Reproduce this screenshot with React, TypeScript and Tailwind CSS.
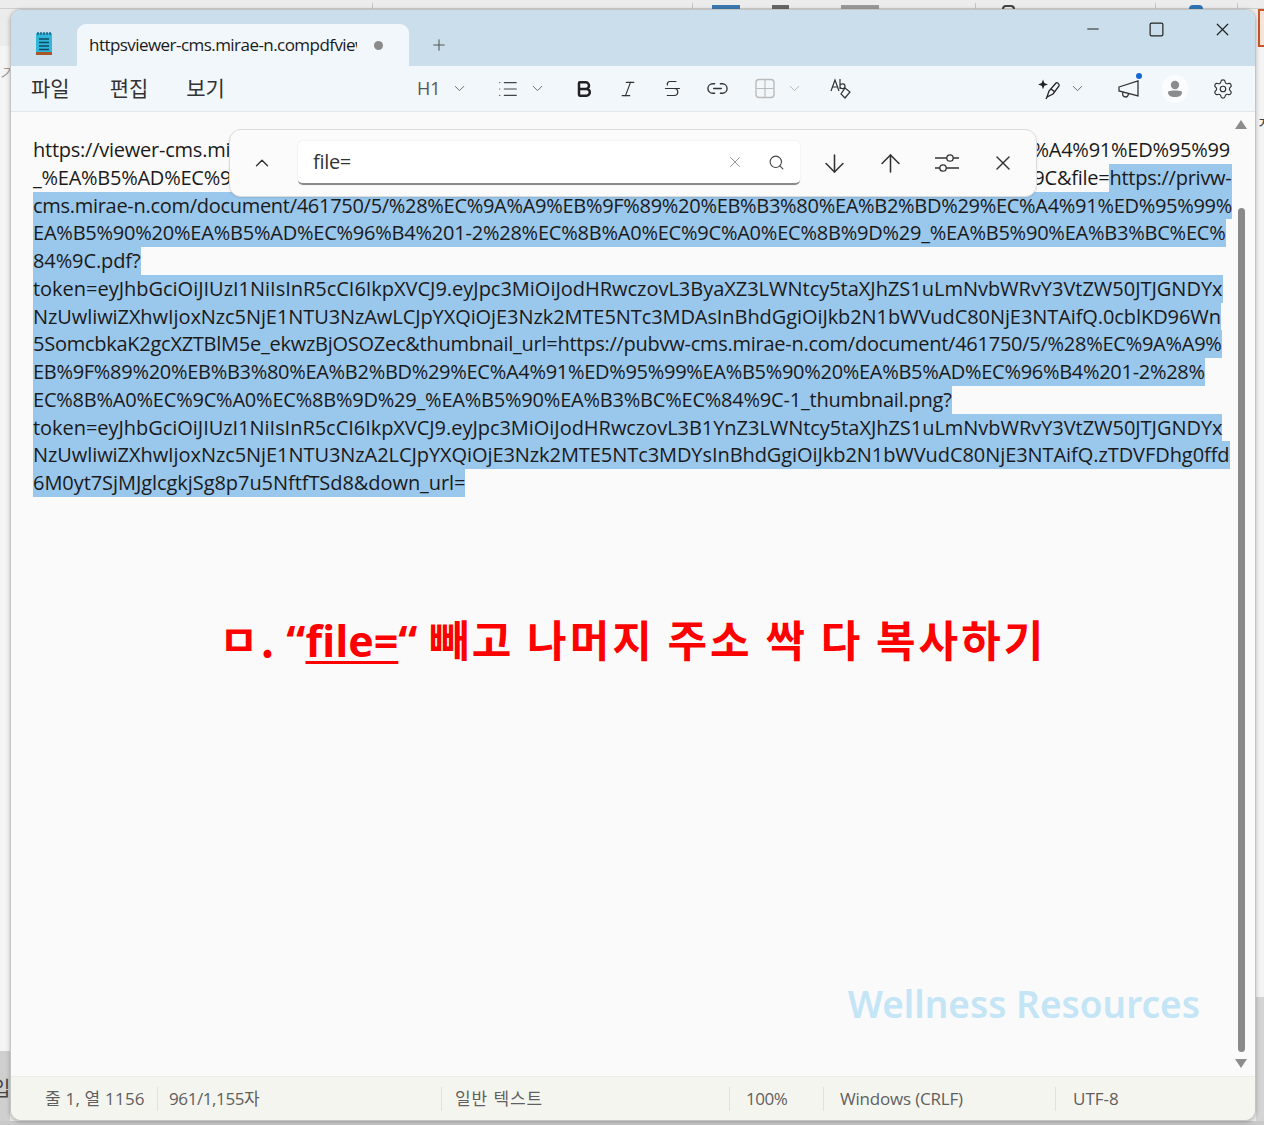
import React from "react";
import { ArrowDown, ArrowUp, Bold, ChevronDown, ChevronUp, Italic, Link2, List, Minus, Plus, Search, Settings, Square, Strikethrough, X } from "lucide-react";

function Line({ className = "", children }: { className?: string; children: React.ReactNode }) {
  return <div className={`h-[27.75px] leading-[27.75px] whitespace-nowrap ${className}`}>{children}</div>;
}
function Sel({ children }: { children: React.ReactNode }) {
  return <span className="inline-block h-[27.75px] bg-[#9ac7ec]">{children}</span>;
}
function Chev({ className = "" }: { className?: string }) {
  return <ChevronDown size={17} strokeWidth={1.2} className={`text-[#555] ${className}`} />;
}
function Notepad() {
  return (
    <svg width="22" height="28" viewBox="0 0 22 28" className="ml-[22px]">
      <rect x="3" y="3" width="16" height="21" rx="1" fill="#2fb6d8" />
      <rect x="3" y="22" width="16" height="3" fill="#a8562a" />
      <path d="M5 2v3M8 2v3M11 2v3M14 2v3M17 2v3" stroke="#1b5f7f" strokeWidth="1.4" />
      <path d="M6 9h10M6 12.5h10M6 16h10M6 19.5h10" stroke="#134a63" strokeWidth="1.3" />
    </svg>
  );
}

export default function App() {
  return (
    <div className="relative w-[1264px] h-[1125px] overflow-hidden bg-[#ececec] font-['Open_Sans','Noto_Sans_CJK_KR',sans-serif] text-[#1c1c1c]">
      {/* what shows round the window */}
      <div className="absolute left-0 top-[8px] w-full h-px bg-[#cfcfcf]" />
      <div className="absolute left-[372px] top-[3px] w-px h-[6px] bg-[#c4c4c4]" />
      <div className="absolute left-[692px] top-[3px] w-px h-[6px] bg-[#c4c4c4]" />
      <div className="absolute left-[975px] top-[3px] w-px h-[6px] bg-[#c4c4c4]" />
      <div className="absolute left-[1155px] top-[3px] w-px h-[6px] bg-[#c4c4c4]" />
      <div className="absolute left-[1237px] top-[3px] w-px h-[6px] bg-[#c4c4c4]" />
      <div className="absolute left-[712px] top-[5px] w-[28px] h-[4px] bg-[#3b78b0]" />
      <div className="absolute left-[772px] top-[5px] w-[17px] h-[4px] bg-[#666]" />
      <div className="absolute left-[841px] top-[5px] w-[38px] h-[4px] bg-[#999]" />
      <div className="absolute left-[1002px] top-[5px] w-[13px] h-[4px] rounded-t-full border-t-2 border-x-2 border-[#444]" />
      <div className="absolute left-[1189px] top-[5px] w-[14px] h-[4px] rounded-t-full bg-[#2e74b5]" />
      <div className="absolute left-0 top-[46px] w-[10px] h-[1005px] bg-[#f4f4f4]" />
      <div className="absolute left-0 top-[1051px] w-[10px] h-[74px] bg-[#cfcfcf]" />
      <div className="absolute left-0 top-[62px] text-[15px] italic text-[#999]">기</div>
      <div className="absolute -left-[8px] top-[1074px] text-[20px] text-[#444]">입</div>
      <div className="absolute left-[1258px] top-[9px] w-[10px] h-[38px] border-2 border-[#c8562a] bg-[#f6e4da]" />
      <div className="absolute left-[1256px] top-[47px] w-[8px] h-[950px] bg-[#f4f4f4]" />
      <div className="absolute left-[1256px] top-[997px] w-[8px] h-[128px] bg-[#d4d4d4]" />
      <div className="absolute left-[1257px] top-[112px] text-[14px] text-[#444]">ㅈ</div>
      <div className="absolute left-0 top-[1121px] w-full h-[4px] bg-[#c9c9c9]" />

      {/* window */}
      <div className="relative ml-[10px] mt-[9px] inline-flex flex-col w-[1246px] h-[1112px] rounded-[11px] overflow-hidden border border-[#c4c4c4] bg-[#fafafa] shadow-[0_1px_4px_rgba(0,0,0,0.25)] align-top">
        {/* title bar */}
        <div className="flex h-[56px] shrink-0 bg-[#cbdeec]">
          <div className="flex items-center h-[56px] pt-[11px]"><Notepad /></div>
          <div className="ml-[22px] mt-[14px] flex items-center w-[332px] h-[42px] rounded-t-[9px] bg-[#f2f7fb] pl-[12px]">
            <span className="w-[268px] overflow-hidden whitespace-nowrap text-[17px] tracking-[-0.55px] text-[#1a1a1a]">httpsviewer-cms.mirae-n.compdfviewer</span>
            <span className="ml-[17px] w-[9px] h-[9px] rounded-full bg-[#8a8a8a]" />
          </div>
          <div className="ml-[21px] mt-[13px] flex items-center h-[43px]"><Plus size={18} strokeWidth={1.4} className="text-[#555]" /></div>
          <div className="ml-auto flex items-start pt-[11px] pr-[22px] text-[#222]">
            <Minus size={18} strokeWidth={1.5} className="-mt-[1px]" />
            <Square size={17} strokeWidth={1.7} className="ml-[46px]" />
            <X size={21} strokeWidth={1.4} className="ml-[47px] -mt-[2px]" />
          </div>
        </div>

        {/* tool bar */}
        <div className="flex items-center h-[46px] shrink-0 bg-[#f2f7fb] border-b border-[#e3e6e8] pl-[20px] text-[21px] text-[#333]">
          <span>파일</span>
          <span className="ml-[40px]">편집</span>
          <span className="ml-[38px]">보기</span>
          <span className="ml-[192px] text-[18px] text-[#555]">H1</span>
          <Chev className="ml-[10px]" />
          <List size={22} strokeWidth={1.3} className="ml-[29px] text-[#444]" />
          <Chev className="ml-[10px]" />
          <Bold size={20} strokeWidth={3} className="ml-[28px] text-[#222]" />
          <Italic size={20} strokeWidth={1.4} className="ml-[24px] text-[#333]" />
          <Strikethrough size={21} strokeWidth={1.4} className="ml-[24px] text-[#333]" />
          <Link2 size={23} strokeWidth={1.4} className="ml-[23px] text-[#333]" />
          <svg width="21" height="21" viewBox="0 0 21 21" className="ml-[26px]">
            <rect x="1" y="1.5" width="18" height="18" rx="3" fill="none" stroke="#bbb" strokeWidth="1.4" />
            <path d="M10 2v17M1.5 10.5h17" stroke="#bbb" strokeWidth="1.2" />
          </svg>
          <ChevronDown size={17} strokeWidth={1.2} className="ml-[10px] text-[#aaa]" />
          <svg width="24" height="24" viewBox="0 0 24 24" className="ml-[26px]" fill="none" stroke="#333" strokeWidth="1.2">
            <path d="M2 14 6 3l4 11M3.500 10h5" />
            <path d="M11 2v10M11 8.500c1-2.300 5-2.300 5 .8s-4 3-5 .8" />
            <path d="m16 11 5 4-5 6-4-4z" />
          </svg>
          <svg width="24" height="24" viewBox="0 0 24 24" className="ml-[185px]" fill="none" stroke="#222" strokeWidth="1.3">
            <path d="M5 2.500 6.300 6 10 7.400 6.300 8.800 5 12.300 3.700 8.800 0 7.400 3.700 6z" fill="#222" stroke="none" />
            <path d="m9 20 2-6 7-8c1-1 4 1 3 3l-6 8z" />
            <path d="m13 12 4 3M9 20l-1 2" />
          </svg>
          <Chev className="ml-[7px]" />
          <div className="relative ml-[31px] w-[24px] h-[24px]">
            <svg width="24" height="24" viewBox="0 0 24 24" fill="none" stroke="#333" strokeWidth="1.3">
              <path d="M2 10 21 4v15L2 14z" />
              <path d="M6 15c-1 3 0 5 3 5 1.500 0 2-1 2.500-3" />
            </svg>
            <span className="absolute -right-[1px] -top-[4px] w-[6px] h-[6px] rounded-full bg-[#1769d2]" />
          </div>
          <div className="ml-[21px] flex items-center justify-center w-[26px] h-[28px] rounded-full bg-[#fbfcfd]">
            <svg width="16" height="18" viewBox="0 0 16 18">
              <circle cx="8" cy="5" r="4.200" fill="#8c8c8c" />
              <path d="M1 12c0-2 14-2 14 0 0 4-3 5-7 5s-7-1-7-5z" fill="#8c8c8c" />
            </svg>
          </div>
          <Settings size={22} strokeWidth={1.3} className="ml-[24px] text-[#333]" />
        </div>

        {/* text */}
        <div className="relative flex flex-1 min-h-0 bg-[#fafafa]">
          <div className="flex-1 min-w-0 flex flex-col pl-[22px] pt-[24px] text-[20px] tracking-[-0.3px] text-[#1a1a1a]">
            <Line className="tracking-[-0.24px]">https://viewer-cms.mirae-n.com/document/461750/5/%28%EC%9A%A9%EB%9F%89%20%EB%B3%80%29%EC%A4%91%ED%95%99</Line>
            <Line className="tracking-[-0.25px]">_%EA%B5%AD%EC%96%B42%28%EC%8B%A0%EC%9C%EC%8B%9D%29_%EA%B5%90%EA%B3%BC%EC%84%9C&amp;file=<Sel>https://privw-</Sel></Line>
            <Line className="tracking-[-0.29px]"><Sel>cms.mirae-n.com/document/461750/5/%28%EC%9A%A9%EB%9F%89%20%EB%B3%80%EA%B2%BD%29%EC%A4%91%ED%95%99%</Sel></Line>
            <Line className="tracking-[-0.22px]"><Sel>EA%B5%90%20%EA%B5%AD%EC%96%B4%201-2%28%EC%8B%A0%EC%9C%A0%EC%8B%9D%29_%EA%B5%90%EA%B3%BC%EC%</Sel></Line>
            <Line className="tracking-[-0.1px]"><Sel>84%9C.pdf?</Sel></Line>
            <Line className="tracking-[-0.02px]"><Sel>token=eyJhbGciOiJIUzI1NiIsInR5cCI6IkpXVCJ9.eyJpc3MiOiJodHRwczovL3ByaXZ3LWNtcy5taXJhZS1uLmNvbWRvY3VtZW50JTJGNDYx</Sel></Line>
            <Line className="tracking-[-0.08px]"><Sel>NzUwliwiZXhwIjoxNzc5NjE1NTU3NzAwLCJpYXQiOjE3Nzk2MTE5NTc3MDAsInBhdGgiOiJkb2N1bWVudC80NjE3NTAifQ.0cblKD96Wn</Sel></Line>
            <Line className="tracking-[-0.26px]"><Sel>5SomcbkaK2gcXZTBlM5e_ekwzBjOSOZec&amp;thumbnail_url=https://pubvw-cms.mirae-n.com/document/461750/5/%28%EC%9A%A9%</Sel></Line>
            <Line className="tracking-[-0.29px]"><Sel>EB%9F%89%20%EB%B3%80%EA%B2%BD%29%EC%A4%91%ED%95%99%EA%B5%90%20%EA%B5%AD%EC%96%B4%201-2%28%</Sel></Line>
            <Line className="tracking-[-0.21px]"><Sel>EC%8B%A0%EC%9C%A0%EC%8B%9D%29_%EA%B5%90%EA%B3%BC%EC%84%9C-1_thumbnail.png?</Sel></Line>
            <Line className="tracking-[-0.04px]"><Sel>token=eyJhbGciOiJIUzI1NiIsInR5cCI6IkpXVCJ9.eyJpc3MiOiJodHRwczovL3B1YnZ3LWNtcy5taXJhZS1uLmNvbWRvY3VtZW50JTJGNDYx</Sel></Line>
            <Line className="tracking-[-0.07px]"><Sel>NzUwliwiZXhwIjoxNzc5NjE1NTU3NzA2LCJpYXQiOjE3Nzk2MTE5NTc3MDYsInBhdGgiOiJkb2N1bWVudC80NjE3NTAifQ.zTDVFDhg0ffd</Sel></Line>
            <Line className="tracking-[-0.06px]"><Sel>6M0yt7SjMJglcgkjSg8p7u5NftfTSd8&amp;down_url=</Sel></Line>

            <div className="mt-[111px] ml-[186px] whitespace-nowrap text-[43px] leading-[60px] tracking-[2px] font-bold text-[#ff0000] font-['Noto_Sans_CJK_KR',sans-serif]">
              ㅁ. <span className="-ml-[2px] text-[43px] tracking-[0px] font-['Open_Sans',sans-serif]">“<span className="underline underline-offset-[4px] decoration-[3px]">file=</span>“</span> <span className="tracking-[3px]">빼고 나머지 주소 싹 다 복사하기</span>
            </div>
            <div className="mt-[311px] mr-[34px] text-right text-[37px] leading-[44px] tracking-normal font-semibold text-[#c4e5f6] font-['Noto_Sans',sans-serif]">Wellness Resources</div>
          </div>
          <div className="w-[14px] mr-[7px] shrink-0 flex flex-col items-center pt-[8px]">
            <div className="w-0 h-0 border-x-[6px] border-x-transparent border-b-[9px] border-b-[#8c8c8c]" />
            <div className="mt-[79px] w-[7px] h-[844px] rounded-full bg-[#8a8a8a]" />
            <div className="mt-[7px] w-0 h-0 border-x-[6px] border-x-transparent border-t-[9px] border-t-[#8c8c8c]" />
          </div>

          {/* find box */}
          <div className="absolute left-[218px] top-[17px] flex items-center w-[808px] h-[68px] rounded-[12px] border border-[#dcdcdc] bg-[#fbfbfb] shadow-[0_1px_2px_rgba(0,0,0,0.1)] text-[#333]">
            <ChevronUp size={22} strokeWidth={1.5} className="ml-[21px]" />
            <div className="ml-[25px] flex items-center w-[502px] h-[44px] rounded-[5px] border-b-2 border-[#8a8a8a] bg-white pl-[15px] shadow-[0_0_2px_rgba(0,0,0,0.1)]">
              <span className="text-[20px] tracking-[-0.3px] text-[#333]">file=</span>
              <X size={18} strokeWidth={1.2} className="ml-auto text-[#888]" />
              <Search size={17} strokeWidth={1.5} className="ml-[24px] mr-[15px] text-[#444]" />
            </div>
            <ArrowDown size={29} strokeWidth={1.3} className="ml-[20px]" />
            <ArrowUp size={29} strokeWidth={1.3} className="ml-[27px]" />
            <svg width="26" height="24" viewBox="0 0 26 24" className="ml-[29px]" fill="none" stroke="#333" strokeWidth="1.3">
              <path d="M1 7h24M1 17h24" />
              <circle cx="16" cy="7" r="3.200" fill="#fbfbfb" />
              <circle cx="9" cy="17" r="3.200" fill="#fbfbfb" />
            </svg>
            <X size={24} strokeWidth={1.4} className="ml-[31px]" />
          </div>
        </div>

        {/* status bar */}
        <div className="flex items-center h-[44px] shrink-0 border-t border-[#ececec] bg-[#f5f5ef] text-[17px] text-[#5f5f5f] whitespace-nowrap">
          <div className="w-[146px] pl-[34px] tracking-[0.2px]">줄 1, 열 1156</div>
          <div className="w-[284px] pl-[11px] border-l border-[#e2e2dc] leading-[24px] tracking-[-0.4px]">961/1,155자</div>
          <div className="w-[288px] pl-[13px] border-l border-[#e2e2dc] leading-[24px] tracking-[0.9px]">일반 텍스트</div>
          <div className="w-[94px] pl-[16px] border-l border-[#e2e2dc] leading-[24px] tracking-[-0.5px]">100%</div>
          <div className="w-[232px] pl-[16px] border-l border-[#e2e2dc] leading-[24px] tracking-[-0.2px]">Windows (CRLF)</div>
          <div className="pl-[17px] border-l border-[#e2e2dc] leading-[24px]">UTF-8</div>
        </div>
      </div>
    </div>
  );
}
